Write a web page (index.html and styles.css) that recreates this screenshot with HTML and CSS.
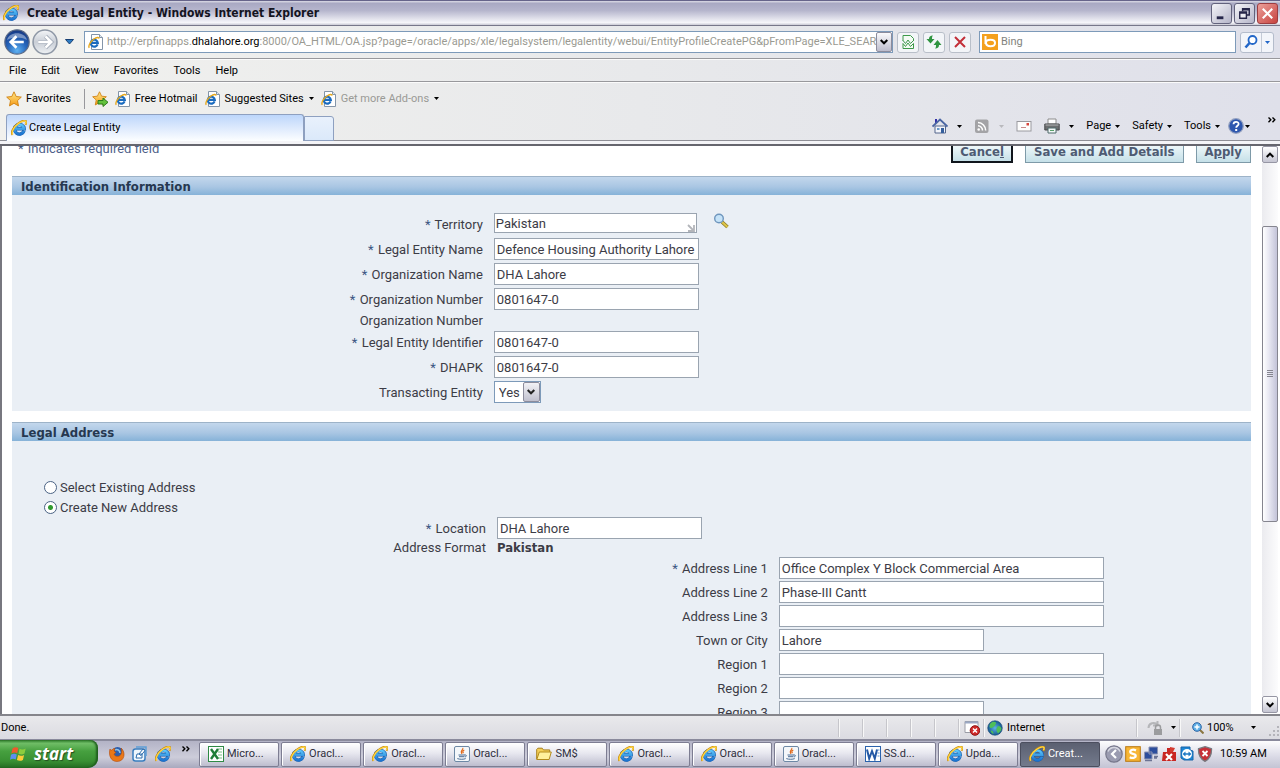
FILE: index.html
```html
<!DOCTYPE html>
<html lang="en">
<head>
<meta charset="utf-8">
<title>Create Legal Entity - Windows Internet Explorer</title>
<link rel="stylesheet" href="styles.css">
</head>
<body>
<svg class="sprite" aria-hidden="true">
  <defs>
    <linearGradient id="g-e" x1="0" y1="0" x2="0" y2="1"><stop offset="0" stop-color="#5cc6fa"/><stop offset="1" stop-color="#1c74d0"/></linearGradient>
    <radialGradient id="g-back" cx=".5" cy=".85" r=".8"><stop offset="0" stop-color="#5fb2f2"/><stop offset=".5" stop-color="#2767bd"/><stop offset="1" stop-color="#173a86"/></radialGradient>
    <linearGradient id="g-fwd" x1="0" y1="0" x2="0" y2="1"><stop offset="0" stop-color="#f4f6f8"/><stop offset=".5" stop-color="#c9ced6"/><stop offset="1" stop-color="#eef1f4"/></linearGradient>
    <linearGradient id="g-star" x1="0" y1="0" x2="0" y2="1"><stop offset="0" stop-color="#ffe98a"/><stop offset="1" stop-color="#f59a16"/></linearGradient>
    <radialGradient id="g-globe"><stop offset="0" stop-color="#5cb5e6"/><stop offset="1" stop-color="#15568f"/></radialGradient>
  </defs>
  <symbol id="ie" viewBox="0 0 16 16">
    <path d="M13 10.8A4.800 4.800 0 1 1 13.200 8.800H5" fill="none" stroke="#175ba8" stroke-width="3.400"/>
    <path d="M13 10.8A4.800 4.800 0 1 1 13.200 8.800H5" fill="none" stroke="url(#g-e)" stroke-width="2.500"/>
    <path d="M1.600 14.800C-.6 12.500 2.600 6.600 7.400 3.200 11 .6 14.600-.2 15.200 1.600c.3 1-.2 2.200-.8 3.200" fill="none" stroke="#c98b0c" stroke-width="2"/>
    <path d="M1.800 14.600C0 12.300 2.800 6.800 7.400 3.500 11 1 14.200 0 15 1.600c.3.8-.2 2-.6 2.700" fill="none" stroke="#ffd745" stroke-width="1.300"/>
  </symbol>
  <symbol id="page-ie" viewBox="0 0 16 16">
    <path d="M3.500.5h8l3 3v12h-11z" fill="#fff" stroke="#8495a8"/><path d="M11.500.5v3h3" fill="#dfe7ef" stroke="#8495a8"/>
    <path d="M9.600 10.400A3.500 3.500 0 1 1 9.800 8.800H4" fill="none" stroke="#1a6bbf" stroke-width="2.200"/>
    <path d="M1.200 13.800C0 11.600 2.600 7.400 6 5c2.600-1.700 4.900-2 5.200-.5" fill="none" stroke="#e8a91c" stroke-width="1.400"/>
  </symbol>
  <symbol id="star" viewBox="0 0 16 16"><path d="M8 .8l2.200 4.700 5.100.6-3.800 3.500 1 5.300L8 12.300l-4.500 2.600 1-5.300L.7 6.100l5.100-.6z" fill="url(#g-star)" stroke="#cf8010" stroke-width=".9" stroke-linejoin="round"/></symbol>
  <symbol id="down" viewBox="0 0 5 3"><path d="M0 0h5L2.500 3z" fill="currentColor"/></symbol>
  <symbol id="chev" viewBox="0 0 8 6"><path d="M.7 1l3.300 3.300L7.300 1" fill="none" stroke="currentColor" stroke-width="2"/></symbol>
  <symbol id="more" viewBox="0 0 8 6"><path d="M.5.500l2.300 2.300L.5 5.200M4.500.500l2.300 2.300-2.300 2.400" fill="none" stroke="currentColor" stroke-width="1.400"/></symbol>
  <symbol id="java" viewBox="0 0 16 16">
    <rect x=".5" y=".5" width="15" height="15" rx="1.500" fill="#f4f7fa" stroke="#6d88a5"/>
    <path d="M8.600 2c1.600 1.600-3.200 2.700-.6 5.800M10.300 4c-1.600.9-2 1.600-.8 3.200" fill="none" stroke="#e26a1b" stroke-width="1.200"/>
    <path d="M4.500 9h6.500M5 10.700h5.500M10.800 9c2.200-.4 2 1.600.2 1.900M3.300 12.600c2.500.9 6.300.9 8.400 0" fill="none" stroke="#4a6c94" stroke-width="1"/>
  </symbol>
  <symbol id="folder" viewBox="0 0 16 16"><path d="M.7 13.200V3.400l1.200-1.200h4.300l1.300 1.700h6.200v2" fill="#f4cf57" stroke="#a8801c"/><path d="M.8 13.500L3.300 6h12l-2.200 7.500z" fill="#fff09c" stroke="#b38a1c"/></symbol>
  <symbol id="excel" viewBox="0 0 16 16"><rect x=".5" y=".5" width="15" height="15" fill="#fff" stroke="#2f8a45"/><path d="M10 3h4M10 6h4M10 9h4M10 12h4" stroke="#78bd83"/><path d="M3 3l7 10M10 3L3 13" stroke="#1f7d38" stroke-width="2.400"/></symbol>
  <symbol id="word" viewBox="0 0 16 16"><rect x=".5" y=".5" width="15" height="15" fill="#fff" stroke="#2a62ac"/><path d="M12.500 4h2M12.500 7h2M12.500 10h2" stroke="#5e92cf"/><path d="M2 3.500l2.200 9L7 5l2.800 7.500L12 3.500" fill="none" stroke="#2459a5" stroke-width="2"/></symbol>
</svg>

<header class="titlebar">
  <svg class="i16"><use href="#ie"/></svg>
  <h1 class="window-title">Create Legal Entity - Windows Internet Explorer</h1>
  <button class="winbtn" aria-label="Minimize"><svg viewBox="0 0 20 20"><path d="M5 14.500h7" stroke="#26264a" stroke-width="3"/></svg></button>
  <button class="winbtn" aria-label="Restore"><svg viewBox="0 0 20 20"><path d="M8 7.500V5h7v6.500h-2.500M8 6h7" fill="none" stroke="#26264a" stroke-width="1.500"/><path d="M5 8.500h7V15H5zM5 9.500h7" fill="#ececf2" stroke="#26264a" stroke-width="1.500"/></svg></button>
  <button class="winbtn close" aria-label="Close"><svg viewBox="0 0 20 20"><path d="M5 5l10 10M15 5L5 15" stroke="#fff" stroke-width="2.200"/></svg></button>
</header>

<nav class="navbar" aria-label="Navigation">
  <div class="history">
    <button class="plain" aria-label="Back"><svg class="i25" viewBox="0 0 25 25"><circle cx="12.500" cy="12.500" r="11.700" fill="url(#g-back)" stroke="#5c6c88" stroke-width="1.200"/><path d="M3 10.500C5 2 20 2 22 10.500 16 7.500 9 7.500 3 10.500z" fill="#fff" opacity=".4"/><path d="M19 12.500H7M12 7l-5.500 5.500L12 18" fill="none" stroke="#fff" stroke-width="2.600"/></svg></button>
    <button class="plain" aria-label="Forward"><svg class="i25" viewBox="0 0 25 25"><circle cx="12.500" cy="12.500" r="11.500" fill="url(#g-fwd)" stroke="#8f98a6" stroke-width="1.500"/><path d="M6 12.500h12M13 7l5.500 5.500L13 18" fill="none" stroke="#a5adba" stroke-width="4"/><path d="M6 12.500h12M13 7l5.500 5.500L13 18" fill="none" stroke="#fff" stroke-width="2.400"/></svg></button>
    <button class="plain recent" aria-label="Recent pages"><svg viewBox="0 0 9 6"><path d="M.5.500h8L4.500 5z" fill="#2d7cc4" stroke="#183f73"/></svg></button>
  </div>
  <div class="address">
    <svg class="i16"><use href="#page-ie"/></svg>
    <div class="url" role="textbox" contenteditable="true" aria-label="Address" spellcheck="false">http://erpfinapps.<b>dhalahore.org</b>:8000/OA_HTML/OA.jsp?page=/oracle/apps/xle/legalsystem/legalentity/webui/EntityProfileCreatePG&amp;pFromPage=XLE_SEARCH</div>
    <button class="drop" aria-label="Show address list"><svg class="chev"><use href="#chev"/></svg></button>
  </div>
  <button class="tool" aria-label="Compatibility view"><svg class="i16" viewBox="0 0 16 16"><path d="M3 7V1.500h7.500l3 3V7M3 9.500v5h10.500v-5" fill="#f4fbf4" stroke="#3e9a4a"/><path d="M3 6.500l2.500 3L8 6l2.500 3.500 3-3M3 9.500l2.500 3L8 9l2.500 3.500 3-3" fill="none" stroke="#3e9a4a"/></svg></button>
  <button class="tool" aria-label="Refresh"><svg class="i16" viewBox="0 0 16 16"><path d="M7 1.500C4 1.500 3 3 3 5H.5L4.500 9.500 8.500 5H6C6 3.500 6 2.500 7 1.500z" fill="#2f9440"/><path d="M9 14.500c3 0 4-1.500 4-3.500V11h2.500L11.500 6 7.500 11H10c0 1.500 0 2.500-1 3.500z" fill="#2f9440"/></svg></button>
  <button class="tool" aria-label="Stop"><svg class="i16" viewBox="0 0 16 16"><path d="M3 3l10 10M13 3L3 13" stroke="#c22f38" stroke-width="2"/></svg></button>
  <div class="search">
    <svg class="i16" viewBox="0 0 16 16"><rect width="16" height="16" fill="#f4a01c"/><path d="M3.500 2v8M4 8.500C4 6.500 6 5.800 8.500 5.800S13 7 13 9s-2 3.200-4.500 3.200S4 11.300 4 8.500z" fill="none" stroke="#fff" stroke-width="2"/></svg>
    <input class="search-input" type="text" placeholder="Bing" aria-label="Search">
  </div>
  <div class="search-go">
    <button class="plain go" aria-label="Go"><svg class="i16" viewBox="0 0 16 16"><circle cx="9.500" cy="6" r="4" fill="#fff" stroke="#2367c8" stroke-width="1.800"/><path d="M6.500 9L2.500 13.500" stroke="#2367c8" stroke-width="2.600"/></svg></button>
    <button class="plain go-drop" aria-label="Search options"><svg class="down"><use href="#down"/></svg></button>
  </div>
</nav>

<nav class="menubar" aria-label="Menu">
  <button class="plain">File</button><button class="plain">Edit</button><button class="plain">View</button><button class="plain">Favorites</button><button class="plain">Tools</button><button class="plain">Help</button>
</nav>

<div class="favbar">
  <button class="plain fav-main"><svg class="i16"><use href="#star"/></svg>Favorites</button>
  <button class="plain" aria-label="Add to favorites bar"><svg class="i16" viewBox="0 0 16 16"><use href="#star" width="15" height="15"/><path d="M6 9.500h5V7l5 4.300-5 4.200V13H6z" fill="#63c23d" stroke="#2c7d1c"/></svg></button>
  <a class="fav" href="#hotmail"><svg class="i16"><use href="#page-ie"/></svg>Free Hotmail</a>
  <a class="fav" href="#suggested"><svg class="i16"><use href="#page-ie"/></svg>Suggested Sites <svg class="down"><use href="#down"/></svg></a>
  <a class="fav muted" href="#addons"><svg class="i16"><use href="#page-ie"/></svg>Get more Add-ons <svg class="down"><use href="#down"/></svg></a>
</div>

<div class="tabbar">
  <button class="tab"><svg class="i16"><use href="#ie"/></svg>Create Legal Entity</button>
  <button class="newtab" aria-label="New tab"></button>
  <div class="commands">
    <button class="plain split" aria-label="Home"><svg class="i16" viewBox="0 0 16 16"><path d="M3 1h2v4H3z" fill="#3430a8"/><path d="M3 8h10.500v7H3z" fill="#f2f4fa" stroke="#55678c"/><path d="M.5 8.500L8 1.500l7.500 7" fill="none" stroke="#4a66a3" stroke-width="1.800"/><path d="M9 10h3v5H9z" fill="#355f9c"/><path d="M5 10h2.500v2H5z" fill="#6a9ac9"/></svg><svg class="down"><use href="#down"/></svg></button>
    <button class="plain split faded" aria-label="Feeds"><svg class="i16" viewBox="0 0 16 16"><rect x="1" y="1.500" width="13.500" height="13.500" rx="2" fill="#a3a3a6"/><circle cx="4.700" cy="11.500" r="1.300" fill="#fff"/><path d="M4 7.700a4.600 4.600 0 0 1 4.500 4.800M4 4.500a8 8 0 0 1 7.700 8" fill="none" stroke="#fff" stroke-width="1.500"/></svg><svg class="down"><use href="#down"/></svg></button>
    <button class="plain" aria-label="Read mail"><svg class="i16" viewBox="0 0 16 16"><rect x="1" y="3.500" width="14" height="9.500" fill="#fdfdfd" stroke="#9a9a9f"/><path d="M10.500 5h2.500v2.500h-2.500z" fill="#d8453c"/><path d="M5 9.500h5" stroke="#c98a8a"/></svg></button>
    <button class="plain split" aria-label="Print"><svg class="i16" viewBox="0 0 16 16"><path d="M4 1h8v5H4z" fill="#fff" stroke="#8c8c8c"/><path d="M.8 6h14.400v6H.8z" fill="#6c6e70" stroke="#47494b"/><path d="M1.500 7h13" stroke="#b5b7b8"/><path d="M4 10h8v5H4z" fill="#f3f8f8" stroke="#4e6a6a"/><path d="M6 12.500h4" stroke="#59a06a"/></svg><svg class="down"><use href="#down"/></svg></button>
    <button class="plain text">Page <svg class="down"><use href="#down"/></svg></button>
    <button class="plain text">Safety <svg class="down"><use href="#down"/></svg></button>
    <button class="plain text">Tools <svg class="down"><use href="#down"/></svg></button>
    <button class="plain help" aria-label="Help"><svg class="i16" viewBox="0 0 16 16"><circle cx="8" cy="8" r="7.300" fill="#2e57ae" stroke="#94a1c0" stroke-width="1.200"/><path d="M5.500 6.300C5.500 3 10.700 3.200 10.600 6c0 1.800-2.400 1.800-2.400 3.800" fill="none" stroke="#fff" stroke-width="1.800"/><path d="M7.200 11h2v2h-2z" fill="#fff"/></svg><svg class="down"><use href="#down"/></svg></button>
    <button class="plain overflow" aria-label="More commands"><svg class="more"><use href="#more"/></svg></button>
  </div>
</div>

<div class="viewport">
  <main class="page">
    <div class="page-actions">
      <p class="hint"><span class="req">*</span> Indicates required field</p>
      <button class="action current">Cance<u>l</u></button>
      <button class="action">Save and Add Details</button>
      <button class="action">A<u>p</u>ply</button>
    </div>

    <section class="panel">
      <h2 class="panel-title">Identification Information</h2>
      <form class="fields identification">
        <label for="territory"><span class="req">*</span> Territory</label>
        <div class="lov"><span class="lov-box"><input id="territory" class="field lov-input" value="Pakistan"><svg class="lov-mark" viewBox="0 0 8 8"><path d="M1 1l5 5M7 1v6H1" fill="none" stroke="#b3b5ba" stroke-width="1.800"/></svg></span><button type="button" class="plain" aria-label="Search for territory"><svg class="i16" viewBox="0 0 16 16"><path d="M9 9l5.500 5" stroke="#8d7b22" stroke-width="3.600"/><path d="M9 9l5.500 5" stroke="#dfc64a" stroke-width="2"/><circle cx="6" cy="5.500" r="4.300" fill="#c6e3f8" stroke="#6f96bd" stroke-width="1.400"/></svg></button></div>
        <label for="entity-name"><span class="req">*</span> Legal Entity Name</label>
        <input id="entity-name" class="field" value="Defence Housing Authority Lahore">
        <label for="org-name"><span class="req">*</span> Organization Name</label>
        <input id="org-name" class="field" value="DHA Lahore">
        <label for="org-number"><span class="req">*</span> Organization Number</label>
        <input id="org-number" class="field" value="0801647-0">
        <span class="static-label">Organization Number</span><span></span>
        <label for="entity-id"><span class="req">*</span> Legal Entity Identifier</label>
        <input id="entity-id" class="field" value="0801647-0">
        <label for="dhapk"><span class="req">*</span> DHAPK</label>
        <input id="dhapk" class="field" value="0801647-0">
        <label for="transacting">Transacting Entity</label>
        <span class="select-box"><select id="transacting" class="select"><option>Yes</option><option>No</option></select><span class="select-arrow"><svg class="chev"><use href="#chev"/></svg></span></span>
      </form>
    </section>

    <section class="panel">
      <h2 class="panel-title">Legal Address</h2>
      <form class="address-form">
        <label class="radio"><input type="radio" name="mode"> Select Existing Address</label>
        <label class="radio"><input type="radio" name="mode" checked> Create New Address</label>
        <div class="fields location">
          <label for="location"><span class="req">*</span> Location</label>
          <input id="location" class="field" value="DHA Lahore">
          <span class="format">Address Format</span><strong class="format-value">Pakistan</strong>
        </div>
        <div class="fields lines">
          <label for="line1"><span class="req">*</span> Address Line 1</label><input id="line1" class="field wide" value="Office Complex Y Block Commercial Area">
          <label for="line2">Address Line 2</label><input id="line2" class="field wide" value="Phase-III Cantt">
          <label for="line3">Address Line 3</label><input id="line3" class="field wide">
          <label for="town">Town or City</label><input id="town" class="field" value="Lahore">
          <label for="region1">Region 1</label><input id="region1" class="field wide">
          <label for="region2">Region 2</label><input id="region2" class="field wide">
          <label for="region3">Region 3</label><input id="region3" class="field">
        </div>
      </form>
    </section>
  </main>
  <div class="scrollbar">
    <button class="scroll-btn up" aria-label="Scroll up"><svg class="chev"><use href="#chev"/></svg></button>
    <div class="track"><div class="thumb"><svg viewBox="0 0 6 8"><path d="M0 .5h6M0 2.500h6M0 4.500h6M0 6.500h6" stroke="#85858f" stroke-width="1"/></svg></div></div>
    <button class="scroll-btn" aria-label="Scroll down"><svg class="chev"><use href="#chev"/></svg></button>
  </div>
</div>

<div class="statusbar">
  <span class="status-text">Done.</span>
  <span class="cell"></span><span class="cell"></span><span class="cell"></span><span class="cell"></span><span class="cell"></span>
  <span class="cell blocked"><svg class="i16" viewBox="0 0 16 16"><path d="M1 1.500h13v11H1z" fill="#fff" stroke="#9a9ca6"/><path d="M1 2.500h13" stroke="#9ba8c4" stroke-width="2"/><circle cx="11" cy="10.500" r="4.800" fill="#cf2a2a" stroke="#8f1515"/><path d="M9 8.500l4 4M13 8.500l-4 4" stroke="#fff" stroke-width="1.500"/></svg></span>
  <span class="cell zone"><svg class="i16" viewBox="0 0 16 16"><circle cx="8" cy="8" r="7.300" fill="url(#g-globe)" stroke="#1b4b74" stroke-width=".6"/><path d="M3 4c2-3 5-2.500 6-1.500C9.500 4 8 4 8 6 6 6.500 6 8 4 8 2.500 8 2 6 3 4zM11 6c2 0 3 1 3.500 2.500-.5 3-2.500 4-3.500 5-1-2-2-3-1.500-5zM3.500 10.500c2 0 3 1 3 3.500C5 13.500 4 12.500 3.500 10.500z" fill="#4fbf58"/></svg>Internet</span>
  <span class="cell guard"><svg class="i16" viewBox="0 0 16 16"><path d="M1.500 8a5 5 0 0 1 9-3M10.500 1v4.500H6" fill="none" stroke="#b5b6b9" stroke-width="2"/><rect x="7" y="9" width="8" height="6" fill="#9b9c9e"/><path d="M8.500 9V7.500a2.500 2.500 0 0 1 5 0V9" fill="none" stroke="#9b9c9e" stroke-width="1.500"/></svg><svg class="down"><use href="#down"/></svg></span>
  <span class="cell magnify"><button class="plain zoom"><svg class="i12" viewBox="0 0 12 12"><path d="M8 8l3.500 3.500" stroke="#8a7640" stroke-width="2"/><circle cx="5" cy="5" r="4.300" fill="#5fb0e8" stroke="#2d64a4"/><path d="M5 2.500v5M2.500 5h5" stroke="#fff" stroke-width="1.500"/></svg>100%<svg class="down"><use href="#down"/></svg></button>
  <svg class="grip" viewBox="0 0 12 12"><path d="M9 1h2v2H9zM5 5h2v2H5zM9 5h2v2H9zM1 9h2v2H1zM5 9h2v2H5zM9 9h2v2H9z" fill="#b4b4ba"/></svg></span>
</div>

<footer class="taskbar">
  <button class="start"><svg class="flag" viewBox="0 0 18 16"><path d="M2.500 2.500C4.500 1 6.500 1 8.300 2.100L7.200 7.200C5.500 6.200 3.400 6.300 1.300 7.400z" fill="#ee5a2c"/><path d="M9.500 2.700c2 1 4 1 6.200-.2l-1.200 5c-2 1.200-4 1.100-6 .2z" fill="#8ccc3e"/><path d="M1 8.700c2-1.100 4-1.200 5.800-.2L5.700 13.500c-1.700-.9-3.800-.9-5.700.2z" fill="#5d8ef0"/><path d="M8.100 9.100c2 .9 4 .9 6-.2l-1.200 5c-2 1.200-3.900 1.100-6 .2z" fill="#fccb38"/></svg><span>start</span></button>
  <div class="quick">
    <button class="plain" aria-label="Firefox"><svg class="i16" viewBox="0 0 16 16"><circle cx="8.500" cy="7" r="6" fill="#2b5fae"/><path d="M6 4c2-1 5 0 5 3" fill="none" stroke="#8cc2ea" stroke-width="1.500"/><path d="M1 3c.5 1 1 1.200 2 1 1-1.300 2-1.500 3-1.500L5 5l2 1.500L5 8c.5 2.500 4 3 6 1.500S13 4 12 2c5 4 4 13.500-4 13.500C1 15.500-.5 8 1 3z" fill="#e97818" stroke="#b54c0c" stroke-width=".6"/></svg></button>
    <button class="plain" aria-label="Show desktop"><svg class="i16" viewBox="0 0 16 16"><rect x="1" y="3" width="12" height="12" rx="2.500" fill="#eef6fc" stroke="#3a7ebf" stroke-width="1.500"/><path d="M4 1h10v9" fill="none" stroke="#5d9ed6" stroke-width="1.500"/><path d="M5 8h5v4H4zM7 8l4-5 2 1.500-4 5z" fill="#fff" stroke="#2d6cab"/></svg></button>
    <button class="plain" aria-label="Internet Explorer"><svg class="i16"><use href="#ie"/></svg></button>
    <button class="plain quick-more" aria-label="More"><svg class="more"><use href="#more"/></svg></button>
  </div>
  <div class="tasks">
    <button class="task"><svg class="i16"><use href="#excel"/></svg>Micro...</button>
    <button class="task"><svg class="i16"><use href="#ie"/></svg>Oracl...</button>
    <button class="task"><svg class="i16"><use href="#ie"/></svg>Oracl...</button>
    <button class="task"><svg class="i16"><use href="#java"/></svg>Oracl...</button>
    <button class="task"><svg class="i16"><use href="#folder"/></svg>SM$</button>
    <button class="task"><svg class="i16"><use href="#ie"/></svg>Oracl...</button>
    <button class="task"><svg class="i16"><use href="#ie"/></svg>Oracl...</button>
    <button class="task"><svg class="i16"><use href="#java"/></svg>Oracl...</button>
    <button class="task"><svg class="i16"><use href="#word"/></svg>SS.d...</button>
    <button class="task"><svg class="i16"><use href="#ie"/></svg>Upda...</button>
    <button class="task active"><svg class="i16"><use href="#ie"/></svg>Creat...</button>
  </div>
  <div class="tray">
    <button class="plain" aria-label="Show hidden icons"><svg class="i18" viewBox="0 0 18 18"><circle cx="9" cy="9" r="8.200" fill="#9a9bb0" stroke="#77788c" stroke-width="1.200"/><path d="M3 6.500a6.500 6.500 0 0 1 12 0" fill="none" stroke="#d7d8e2" stroke-width="1.500"/><path d="M11 5L7 9l4 4" fill="none" stroke="#fff" stroke-width="2.200"/></svg></button>
    <svg class="i16" viewBox="0 0 16 16"><rect x=".7" y=".7" width="14.600" height="14.600" fill="#f7b534" stroke="#b87812"/><path d="M11 4.500C7.500 2.500 4.500 4.500 5.500 6.700c1 1.600 5 .8 5.200 3 .2 2.300-3.500 2.800-6 1.500" fill="none" stroke="#fff" stroke-width="2.200"/></svg>
    <svg class="i16" viewBox="0 0 16 16"><path d="M6 1h8.500v7H6zM1.500 6H9v7H1.500z" fill="#2c4d9c" stroke="#8c94b3"/><path d="M2 14.500h7M11 10.500h4M11 12h3" stroke="#6c7394" stroke-width="1.500"/></svg>
    <svg class="i16" viewBox="0 0 16 16"><path d="M2 6h4V2h3v4h6v9H1z" fill="#c92622"/><path d="M9 1l5 1-2 4H9z" fill="#d43b30"/><path d="M5 8l6 6M11 8l-6 6" stroke="#fff" stroke-width="2.200"/></svg>
    <svg class="i16" viewBox="0 0 16 16"><path d="M2 1h9v3l3 1v9H5l-3-2z" fill="#1d87d6" stroke="#1965a8"/><circle cx="8" cy="8" r="5" fill="#fff"/><path d="M3.500 8L6.500 5.500v5zM12.500 8L9.500 5.500v5z" fill="#1d78c4"/><path d="M6 8h4" stroke="#1d78c4" stroke-width="1.500"/></svg>
    <svg class="i16" viewBox="0 0 16 16"><path d="M8 .7l6.500 2C14.800 9 12.500 13 8 15.300 3.500 13 1.200 9 1.500 2.700z" fill="#c63038" stroke="#77797f" stroke-width="1.300"/><path d="M5.500 5l5 5M10.500 5l-5 5" stroke="#fff" stroke-width="1.800"/></svg>
    <time class="clock">10:59 AM</time>
  </div>
</footer>
</body>
</html>
```
FILE: styles.css
```css
* { box-sizing: border-box; }

body {
  margin: 0;
  height: 100vh;
  display: flex;
  flex-direction: column;
  overflow: hidden;
  background: linear-gradient(90deg, #f1f1ee, #e8e9eb 50%, #dfe0ea);
  color: #000;
  font: 11px/14px Roboto, "Liberation Sans", sans-serif;
}

button, input, select { font: inherit; color: inherit; margin: 0; }
.sprite { position: absolute; width: 0; height: 0; }
svg { display: block; flex: none; }
.i12 { width: 12px; height: 12px; }
.i16 { width: 16px; height: 16px; }
.i18 { width: 18px; height: 18px; }
.i25 { width: 26px; height: 26px; }
.down { width: 5px; height: 3px; }
.chev { width: 8px; height: 6px; }
.more { width: 8px; height: 6px; }

.plain {
  display: flex;
  align-items: center;
  border: 0;
  padding: 0;
  background: none;
  white-space: nowrap;
}

/* Title bar */
.titlebar {
  flex: none;
  height: 26px;
  display: flex;
  align-items: center;
  gap: 2px;
  padding: 0 2px 0 3px;
  border-top: 1px solid #66648a;
  border-bottom: 1px solid #77778a;
  background: linear-gradient(#dcdce6, #a9a9c3 10%, #b6b6cd 40%, #f6f6fa 90%, #c9c9d4);
}
.window-title {
  flex: 1;
  margin: 0 0 0 6px;
  font: bold 12px/16px "DejaVu Sans Condensed", "DejaVu Sans", sans-serif;
  color: #14141f;
}
.winbtn {
  width: 21px;
  height: 21px;
  padding: 0;
  border: 1px solid #62627c;
  border-radius: 3px;
  background: linear-gradient(135deg, #f4f4f8, #b4b4c8);
}
.winbtn.close { border-color: #9c3d40; background: linear-gradient(135deg, #eca09a, #c7433f); }

/* Address row */
.navbar {
  flex: none;
  height: 33px;
  display: flex;
  align-items: center;
  gap: 4px;
  padding: 0 6px 0 4px;
  border-bottom: 1px solid #98989c;
}
.history { display: flex; align-items: center; gap: 2px; margin-right: 6px; }
.history .plain { border-radius: 50%; }
.history .recent { margin-left: 5px; border-radius: 0; }
.recent svg { width: 9px; height: 6px; }
.address {
  flex: 810 1 0;
  min-width: 0;
  display: flex;
  align-items: center;
  height: 22px;
  padding-left: 3px;
  border: 1px solid #7d9ab9;
  background: #fff;
}
.url {
  flex: 1;
  min-width: 0;
  margin-left: 3px;
  overflow: hidden;
  white-space: nowrap;
  color: #9a9a92;
}
.url b { font-weight: normal; color: #000; }
.drop {
  display: grid;
  place-items: center;
  width: 16px;
  height: 20px;
  padding: 0;
  border: 1px solid #8c8c9c;
  border-radius: 2px;
  background: linear-gradient(#fafafc, #bcbccc);
}
.tool {
  display: grid;
  place-items: center;
  width: 22px;
  height: 21px;
  padding: 0;
  border: 1px solid #b9bfc9;
  border-radius: 3px;
  background: #f3f5f8;
}
.search {
  flex: 255 1 0;
  min-width: 0;
  display: flex;
  align-items: center;
  height: 22px;
  margin-left: 4px;
  padding-left: 2px;
  border: 1px solid #7d9ab9;
  background: #fff;
}
.search-input { flex: 1; min-width: 0; border: 0; padding: 0 3px; background: none; }
.search-input::placeholder { color: #83837e; opacity: 1; }
.search-go { display: flex; height: 21px; border: 1px solid #b4bccb; border-radius: 3px; background: #f3f5fa; }
.go { padding: 0 2px; }
.go-drop { padding: 0 3px; border-left: 1px solid #c4cad6; color: #2367c8; }

/* Menu, favorites, tabs */
.menubar {
  flex: none;
  height: 23px;
  display: flex;
  gap: 15px;
  padding-left: 9px;
  border-bottom: 1px solid #98989c;
  border-top: 1px solid #fbfbfb;
}
.favbar {
  flex: none;
  height: 32px;
  display: flex;
  align-items: center;
  gap: 7px;
  padding: 0 6px;
  border-top: 1px solid #fbfbfb;
}
.fav-main { gap: 4px; height: 20px; padding-right: 13px; border-right: 1px solid #98989c; }
.fav { display: flex; align-items: center; gap: 4px; color: #000; text-decoration: none; }
.fav .down { margin-left: 1px; }
.fav.muted { color: #9a9a96; }
.fav .down { color: #000; }
.tabbar {
  flex: none;
  height: 32px;
  display: flex;
  align-items: flex-start;
  padding-left: 6px;
  border-bottom: 2px solid #66666e;
  background: linear-gradient(transparent 26px, #8f8f96 26px, #8f8f96 27px, #f4f4f7 27px);
}
.tab {
  flex: 0 0 24%;
  min-width: 0;
  max-width: 298px;
  height: 27px;
  display: flex;
  align-items: center;
  gap: 2px;
  padding: 0 4px;
  border: 1px solid #8ea0c0;
  border-bottom: 0;
  border-radius: 3px 3px 0 0;
  background: linear-gradient(#bdd6fb, #fdfeff);
}
.newtab {
  width: 30px;
  height: 25px;
  margin-top: 2px;
  border: 1px solid #8ea0c0;
  border-radius: 0 3px 0 0;
  background: linear-gradient(#e9f1fc, #dbe9fa);
}
.commands { flex: 1; display: flex; justify-content: flex-end; align-items: center; height: 24px; padding-right: 4px; }
.commands .plain { height: 24px; margin-left: 12px; gap: 4px; }
.commands .split { gap: 9px; }
.commands .faded { color: #b9b9bd; }
.commands .help { gap: 1px; margin-left: 8px; }
.commands .overflow { margin-left: 18px; align-items: flex-start; padding-top: 3px; }

/* Page */
.viewport { flex: 1; min-height: 0; display: flex; border-left: 2px solid #77777f; background: #fff; overflow: hidden; }
.page {
  flex: 1;
  min-width: 0;
  padding: 0 11px 0 10px;
  overflow: hidden;
  color: #3c3c46;
  font: 13px/15px Roboto, "Liberation Sans", sans-serif;
}
.page-actions { display: flex; align-items: flex-start; gap: 12px; margin-top: -5px; height: 35px; }
.hint { flex: 1; margin: 0; padding-left: 6px; color: #4d5f8a; }
.req { color: #3c5683; margin-right: 1px; }
.action {
  height: 22px;
  padding: 0 8px;
  border: 1px solid #7e9aa8;
  background: linear-gradient(#f7fcfd, #c5e0e8);
  color: #4e5b73;
  font: bold 13px/20px "DejaVu Sans Condensed", "DejaVu Sans", sans-serif;
  white-space: nowrap;
}
.action.current { border: 2px solid #10151c; padding: 0 7px; line-height: 18px; }
.panel { margin-bottom: 11px; background: #eaeff5; }
.panel-title {
  margin: 0;
  height: 19px;
  padding-left: 9px;
  border-top: 1px solid #9db3c8;
  background: linear-gradient(#c3d7ec, #a9c6e3 55%, #86b2d8);
  color: #263850;
  font: bold 13px/19px "DejaVu Sans Condensed", "DejaVu Sans", sans-serif;
}
.fields { display: grid; column-gap: 11px; row-gap: 3px; align-items: center; justify-items: start; }
.fields > label, .static-label, .format { justify-self: end; white-space: nowrap; }
.identification { grid-template-columns: 38% 1fr; padding: 18px 0 8px; }
.field {
  width: 205px;
  height: 22px;
  padding: 0 2px;
  border: 1px solid #9aa4b0;
  background: #fff;
}
.field.wide { width: 325px; }
.lov { display: flex; gap: 16px; height: 22px; align-items: flex-start; }
.lov-box { position: relative; }
.lov-input { display: block; width: 203px; height: 20px; padding-left: 1px; }
.lov-mark { position: absolute; right: 2px; bottom: 1px; width: 8px; height: 8px; }
.select-box { position: relative; }
.select {
  display: block;
  width: 47px;
  height: 22px;
  padding: 0 0 0 4px;
  border: 1px solid #7d9ab9;
  border-radius: 0;
  background: #fff;
  appearance: none;
}
.select-arrow {
  position: absolute;
  inset: 1px 1px 1px auto;
  width: 17px;
  display: grid;
  place-items: center;
  border: 1px solid #8c8c9c;
  border-radius: 2px;
  background: linear-gradient(#f2f2f6, #c0c0ce);
  color: #222;
  pointer-events: none;
}
.address-form { padding-top: 36px; }
.radio { display: flex; align-items: center; gap: 3px; height: 20px; padding-left: 32px; }
.radio input {
  appearance: none;
  width: 13px;
  height: 13px;
  border: 1px solid #4b6384;
  border-radius: 50%;
  background: #fff;
}
.radio input:checked { background: radial-gradient(#2f9a2f 2px, #fff 3px); }
.location { grid-template-columns: 38% 1fr; row-gap: 0; padding-left: 5px; }
.format, .format-value { line-height: 18px; }
.format-value { font-family: "DejaVu Sans Condensed", "DejaVu Sans", sans-serif; }
.lines { grid-template-columns: 61% 1fr; row-gap: 2px; }

/* Scroll bar */
.scrollbar { flex: none; width: 18px; display: flex; flex-direction: column; padding: 0 2px 1px 0; background: #fff; }
.scroll-btn {
  flex: none;
  display: grid;
  place-items: center;
  height: 17px;
  padding: 0;
  border: 1px solid #9696a4;
  border-radius: 2px;
  background: linear-gradient(#fff, #c5c5d2);
}
.scroll-btn.up .chev { transform: scaleY(-1); }
.track { flex: 1; padding: 63px 0 0; background: linear-gradient(90deg, #ebebef, #fcfcfd); }
.thumb {
  height: 63%;
  display: grid;
  place-items: center;
  border: 1px solid #85858f;
  border-radius: 2px;
  background: linear-gradient(90deg, #fff, #e9e9f3 40%, #c3c3d8);
}
.thumb svg { width: 6px; height: 8px; }

/* Status bar */
.statusbar {
  flex: none;
  height: 25px;
  display: flex;
  align-items: center;
  border-top: 2px solid #85858b;
  background: linear-gradient(#e9e9ec, #dbdbe1);
}
.status-text { flex: 1; padding-left: 1px; }
.cell { display: flex; align-items: center; height: 18px; width: 24px; border-left: 1px solid #f8f8f8; box-shadow: -1px 0 #c6c6cb; }
.blocked { width: 25px; padding-left: 4px; }
.zone { width: 153px; gap: 4px; padding-left: 2px; }
.guard { width: 43px; gap: 8px; padding-left: 9px; }
.magnify { width: 100px; padding-left: 11px; justify-content: space-between; }
.zoom { gap: 3px; }
.zoom .down { margin-left: 14px; }
.grip { width: 12px; height: 12px; margin-top: 6px; }

/* Task bar */
.taskbar {
  flex: none;
  height: 29px;
  display: flex;
  border-top: 2px solid #8a8a9c;
  background: linear-gradient(#b3b3c6, #cdcdda 60%, #a9a9be);
}
.start {
  width: 98px;
  display: flex;
  align-items: center;
  gap: 6px;
  padding: 0 0 0 10px;
  margin-top: -1px;
  border: 0;
  border-radius: 0 8px 10px 0;
  background: linear-gradient(#2f7d2c, #6fbd66 12%, #46a03f 40%, #399033 75%, #246b22);
  box-shadow: inset -2px 0 2px #1f5e1d;
  color: #fff;
  font: italic bold 17px/20px "Open Sans", "Noto Sans", sans-serif;
  text-shadow: 1px 1px 1px #234e20;
}
.flag { width: 18px; height: 16px; }
.quick { display: flex; align-items: center; gap: 7px; padding: 0 9px 2px 11px; }
.quick .quick-more { align-items: flex-start; height: 16px; margin-left: 4px; }
.tasks { flex: 1; min-width: 0; display: flex; gap: 2px; padding: 1px 0; }
.task {
  flex: 1 1 0;
  min-width: 0;
  display: flex;
  align-items: center;
  gap: 3px;
  padding: 0 0 1px 8px;
  border: 1px solid #7d7d92;
  border-radius: 2px;
  background: linear-gradient(#fff, #e7e7ef 45%, #bdbdce);
  box-shadow: inset 1px 0 #fff;
  color: #2e2e3c;
  white-space: nowrap;
  overflow: hidden;
}
.task.active { background: linear-gradient(#5b6071, #737a8c); border-color: #4b4e5e; box-shadow: none; color: #fff; }
.tray {
  flex: none;
  width: 180px;
  display: flex;
  align-items: center;
  gap: 2px;
  padding: 0 0 2px 5px;
  background: linear-gradient(#fdfdfe, #d9d9e5 60%, #c4c4d4);
}
.clock { margin-left: 5px; white-space: nowrap; }
```
